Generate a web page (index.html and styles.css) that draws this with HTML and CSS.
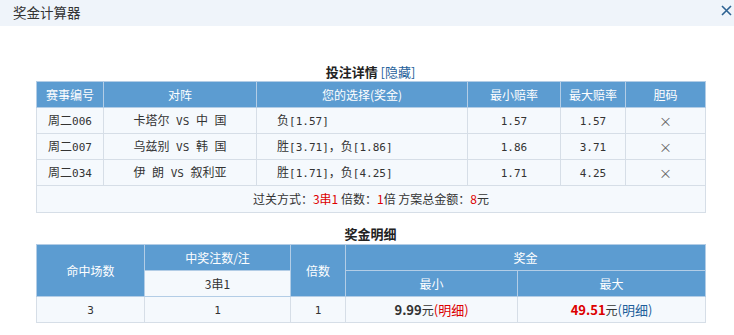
FILE: index.html
```html
<!DOCTYPE html>
<html lang="zh">
<head>
<meta charset="utf-8">
<title>奖金计算器</title>
<link rel="stylesheet" href="styles.css">
</head>
<body>
<div class="titlebar">
  <span class="title">奖金计算器</span>
  <svg class="close" width="11" height="11" viewBox="0 0 11 11"><path d="M1 1L10 10M10 1L1 10" stroke="#2d6292" stroke-width="1.6" fill="none"/></svg>
</div>
<div class="content">
  <div class="section-title">投注详情 <a class="toggle">[隐藏]</a></div>
  <table class="grid bets">
    <colgroup>
      <col style="width:67px"><col style="width:153px"><col style="width:211px"><col style="width:93px"><col style="width:65px"><col style="width:80px">
    </colgroup>
    <thead>
      <tr><th>赛事编号</th><th>对阵</th><th>您的选择(奖金)</th><th>最小赔率</th><th>最大赔率</th><th>胆码</th></tr>
    </thead>
    <tbody>
      <tr><td>周二<span class="n">006</span></td><td>卡塔尔<span class="n"> VS </span>中<span class="n"> </span>国</td><td class="left">负<span class="n">[1.57]</span></td><td><span class="n">1.57</span></td><td><span class="n">1.57</span></td><td><span class="x">×</span></td></tr>
      <tr><td>周二<span class="n">007</span></td><td>乌兹别<span class="n"> VS </span>韩<span class="n"> </span>国</td><td class="left">胜<span class="n">[3.71]</span>，负<span class="n">[1.86]</span></td><td><span class="n">1.86</span></td><td><span class="n">3.71</span></td><td><span class="x">×</span></td></tr>
      <tr><td>周二<span class="n">034</span></td><td>伊<span class="n"> </span>朗<span class="n"> VS </span>叙利亚</td><td class="left">胜<span class="n">[1.71]</span>，负<span class="n">[4.25]</span></td><td><span class="n">1.71</span></td><td><span class="n">4.25</span></td><td><span class="x">×</span></td></tr>
      <tr><td colspan="6" class="summary">过关方式：<span class="red">3串1</span> 倍数：<span class="red">1</span>倍 方案总金额：<span class="red">8</span>元</td></tr>
    </tbody>
  </table>
  <div class="section-title second">奖金明细</div>
  <table class="grid prize">
    <colgroup>
      <col style="width:108px"><col style="width:146px"><col style="width:55px"><col style="width:172px"><col style="width:188px">
    </colgroup>
    <thead>
      <tr><th rowspan="2">命中场数</th><th>中奖注数/注</th><th rowspan="2">倍数</th><th colspan="2">奖金</th></tr>
      <tr><td class="sub">3串1</td><th>最小</th><th>最大</th></tr>
    </thead>
    <tbody>
      <tr><td><span class="n">3</span></td><td><span class="n">1</span></td><td><span class="n">1</span></td><td><b class="amt">9.99</b>元<a class="detail red">(明细)</a></td><td><b class="amt red">49.51</b>元<a class="detail blue">(明细)</a></td></tr>
    </tbody>
  </table>
</div>
</body>
</html>
```
FILE: styles.css
```css
* { box-sizing: border-box; }
html, body { margin: 0; padding: 0; background: #fff; }
body {
  font-family: "Noto Sans CJK SC", "Liberation Sans", sans-serif;
  font-size: 12px;
  color: #333;
  width: 734px;
  height: 335px;
  overflow: hidden;
}
.titlebar {
  height: 26px;
  background: #eff4fa;
  display: flex;
  align-items: center;
  justify-content: space-between;
  padding: 0 2px 2px 13px;
}
.title { font-size: 13.5px; color: #333; line-height: 22px; }
.close { display: block; margin-top: -3px; }
.content { padding: 38px 29px 0 36px; }
.section-title {
  height: 17px;
  line-height: 15px;
  text-align: center;
  font-size: 13px;
  font-weight: bold;
  color: #222;
}
.section-title.second { margin-top: 13px; height: 18px; }
.toggle { font-weight: normal; color: #1f5f9b; font-size: 13px; }
.grid {
  width: 669px;
  border-collapse: collapse;
  table-layout: fixed;
}
.grid th, .grid td {
  height: 26px;
  padding: 0;
  text-align: center;
  vertical-align: middle;
  line-height: 14px;
}
.grid th {
  background: #5c9cd1;
  color: #fff;
  font-weight: normal;
  font-size: 12px;
  border: 1px solid #b3cde6;
}
.grid td {
  background: #f5f9fd;
  border: 1px solid #d6dee7;
  font-size: 12px;
  color: #333;
}
.grid td.left { text-align: left; padding-left: 20px; }
.grid td.summary { height: 27px; }
.grid td.sub { border-color: #b3cde6; }
.n { font-family: "DejaVu Sans Mono", monospace; font-size: 11px; white-space: pre; }
.x { color: #666; font-size: 13px; }
.red { color: #d00; }
.blue { color: #1f5f9b; }
.amt { font-weight: bold; font-size: 13px; }
.detail { font-size: 13px; }
```
